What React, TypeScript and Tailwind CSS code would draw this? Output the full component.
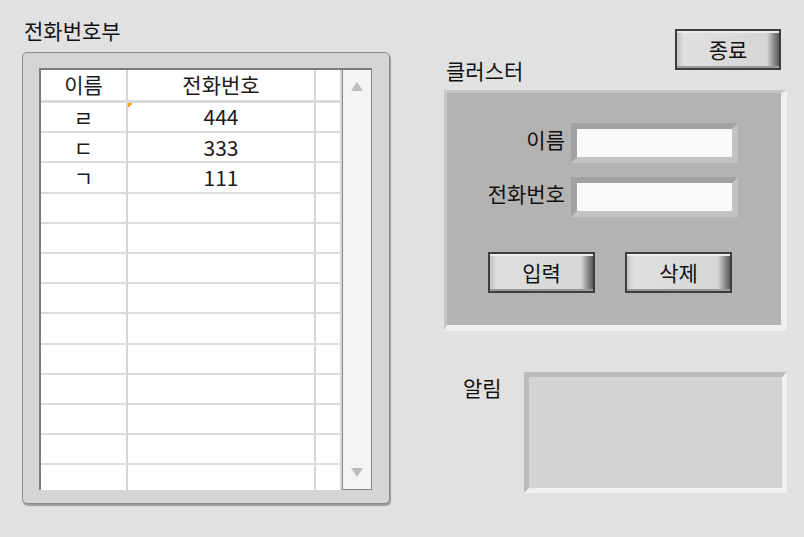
const FONT = "font-['Malgun_Gothic','Noto_Sans_CJK_KR',sans-serif]";

const rows: [string, string][] = [
  ['ㄹ', '444'],
  ['ㄷ', '333'],
  ['ㄱ', '111'],
];

function LvButton({ label, className = '' }: { label: string; className?: string }) {
  return (
    <button
      className={`border-2 border-[#3e3e3e] bg-[linear-gradient(to_right,#c2c2c2,#e0e0e0_7px,#d6d6d6_calc(100%_-_12px),#8a8a8a_calc(100%_-_5px),#5a5a5a)] shadow-[inset_0_2px_0_#ececec,inset_0_-2px_0_#9a9a9a] text-[21px] leading-none text-[#111] ${className}`}
    >
      {label}
    </button>
  );
}

function TextField() {
  return (
    <div className="w-[167px] h-[40px] border-[6px] border-t-[#a2a2a2] border-l-[#a2a2a2] border-b-[#c3c3c3] border-r-[#c3c3c3] bg-[#fafafa]" />
  );
}

function PhoneTable() {
  const blanks = Array.from({ length: 10 });
  return (
    <div className="flex w-[333px] h-[422px] border-t-2 border-l-2 border-[#7c7c7c] bg-white">
      <div className="w-[301px] flex flex-col overflow-hidden">
        <div className="flex h-[33px] shrink-0 border-b-[3px] border-[#dadada] text-[21px] text-[#1b1b1b]">
          <div className="w-[87px] border-r-2 border-[#d6d6d6] flex items-center justify-center">이름</div>
          <div className="w-[188px] border-r-2 border-[#d6d6d6] flex items-center justify-center">전화번호</div>
          <div className="w-[26px] border-r-2 border-[#d6d6d6]" />
        </div>
        {rows.map(([name, phone], i) => (
          <div key={i} className="flex h-[30.2px] shrink-0 border-b-2 border-[#dcdcdc] text-[21px] text-[#1b1b1b]">
            <div className="w-[87px] border-r-2 border-[#d6d6d6] flex items-center justify-center pt-[1px]">{name}</div>
            <div className="relative w-[188px] border-r-2 border-[#d6d6d6] flex items-center justify-center">
              {i === 0 && (
                <span className="absolute top-0 left-0 w-[4px] h-[4px] border-t-2 border-l-2 border-[#f2a41f]" />
              )}
              {phone}
            </div>
            <div className="w-[26px] border-r-2 border-[#d6d6d6]" />
          </div>
        ))}
        {blanks.map((_, i) => (
          <div key={i} className="flex h-[30.2px] shrink-0 border-b-2 border-[#dcdcdc]">
            <div className="w-[87px] border-r-2 border-[#d6d6d6]" />
            <div className="w-[188px] border-r-2 border-[#d6d6d6]" />
            <div className="w-[26px] border-r-2 border-[#d6d6d6]" />
          </div>
        ))}
      </div>
      <div className="w-[30px] border-x border-b border-[#858585] bg-[#f4f4f4] flex flex-col items-center justify-between pt-[12px] pb-[12px]">
        <svg width="12" height="9" viewBox="0 0 12 9">
          <path d="M6 0 L12 9 L0 9 Z" fill="#bdbdbd" />
        </svg>
        <svg width="12" height="9" viewBox="0 0 12 9">
          <path d="M0 0 L12 0 L6 9 Z" fill="#bdbdbd" />
        </svg>
      </div>
    </div>
  );
}

export default function App() {
  return (
    <div className={`w-[804px] h-[537px] bg-[#e1e1e1] flex ${FONT} text-[#111] overflow-hidden`}>
      {/* left: 전화번호부 table */}
      <div className="w-[390px] pl-[22px] pt-[18px] flex flex-col">
        <div className="text-[21px] leading-[24px] pl-[2px] h-[34px]">전화번호부</div>
        <div className="w-[368px] h-[452px] rounded-[5px] border border-[#8a8a8a] bg-[#d5d5d5] shadow-[1px_2px_1px_#9c9c9c] pl-[16px] pt-[15px]">
          <PhoneTable />
        </div>
      </div>

      {/* right: cluster + buttons */}
      <div className="w-[343px] ml-[54px] flex flex-col">
        <div className="flex justify-between h-[90px]">
          <div className="self-end mb-[8px] pl-[2px] text-[21px] leading-[24px]">클러스터</div>
          <LvButton label="종료" className="mt-[29px] mr-[6px] w-[106px] h-[41px]" />
        </div>

        <div className="h-[241px] border-t-[3px] border-l-[3px] border-b-[6px] border-r-[6px] border-t-[#c6c6c6] border-l-[#c6c6c6] border-b-[#efefef] border-r-[#efefef] bg-[#b3b3b3] flex flex-col pt-[30px]">
          <div className="flex items-center gap-[6px] justify-end pr-[43px]">
            <span className="text-[21px] -mt-[6px]">이름</span>
            <TextField />
          </div>
          <div className="flex items-center gap-[6px] justify-end pr-[43px] mt-[14px]">
            <span className="text-[21px] -mt-[6px]">전화번호</span>
            <TextField />
          </div>
          <div className="flex gap-[30px] pl-[41px] mt-[35px]">
            <LvButton label="입력" className="w-[107px] h-[41px]" />
            <LvButton label="삭제" className="w-[107px] h-[41px]" />
          </div>
        </div>

        <div className="flex mt-[41px]">
          <div className="w-[80px] pl-[19px] pt-[3px] text-[21px] leading-[24px]">알림</div>
          <div className="w-[263px] h-[121px] border-[5px] border-t-[#bcbcbc] border-l-[#bcbcbc] border-b-[#f1f1f1] border-r-[#f1f1f1] bg-[#d3d3d3]" />
        </div>
      </div>
    </div>
  );
}
